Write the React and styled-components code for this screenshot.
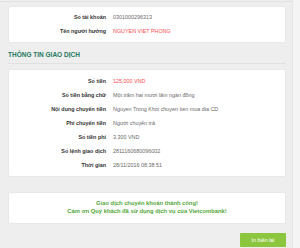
import React from "react";
import styled, { createGlobalStyle } from "styled-components";

const GlobalStyle = createGlobalStyle`
  html, body {
    margin: 0;
    padding: 0;
    background: #f4f4f4;
    font-family: "Liberation Sans", Arial, sans-serif;
  }
`;

const Page = styled.div`
  display: flex;
  width: 300px;
  height: 248px;
  overflow: hidden;
`;

const Main = styled.div`
  width: 293px;
  background: #eeeeee;
  padding: 0 6px 0 8px;
  box-sizing: border-box;
  border-right: 1px solid #e6e6e6;
`;

const PrevEdge = styled.div`
  height: 1px;
  border-bottom: 1px solid #e2e2e2;
  margin: 0 -6px 4px -8px;
`;

const Card = styled.div`
  background: #fff;
  border-radius: 2px;
  border: 1px solid #e8e8e8;
  box-sizing: border-box;
  padding: ${(p) => p.$pad || "4px 0"};
`;

const Row = styled.div`
  display: grid;
  grid-template-columns: 97px 1fr;
  column-gap: 7px;
  height: 14px;
  align-items: center;
  font-size: 5.4px;
  white-space: nowrap;
`;

const Label = styled.div`
  text-align: right;
  font-weight: bold;
  color: #333;
`;

const Value = styled.div`
  color: ${(p) => (p.$red ? "#ff4a4a" : "#6a6a6a")};
`;

const Title = styled.div`
  margin-top: 8px;
  padding-bottom: 4px;
  border-bottom: 1px solid #e0e0e0;
  margin-bottom: 5px;
  font-size: 6.5px;
  line-height: 8px;
  font-weight: bold;
  color: #237a5f;
`;

const Message = styled(Card)`
  margin-top: 15px;
  padding: 7px 0 8px;
  text-align: center;
  font-size: 5.8px;
  line-height: 7.6px;
  font-weight: bold;
  color: #52a83a;
`;

const Actions = styled.div`
  display: flex;
  justify-content: flex-end;
  margin-top: 9px;
`;

const Button = styled.button`
  width: 46px;
  height: 14px;
  border: none;
  border-radius: 1px;
  padding: 0;
  background: #8cc63f;
  color: #fff;
  font-family: "Liberation Sans", Arial, sans-serif;
  font-size: 5.4px;
  cursor: pointer;
`;

const account = [
  { label: "Số tài khoản", value: "0301000296313" },
  { label: "Tên người hưởng", value: "NGUYEN VIET PHONG", red: true },
];

const details = [
  { label: "Số tiền", value: "125,000 VND", red: true },
  { label: "Số tiền bằng chữ", value: "Một trăm hai mươi lăm ngàn đồng" },
  { label: "Nội dung chuyển tiền", value: "Nguyen Trong Khoi chuyen tien mua dia CD" },
  { label: "Phí chuyển tiền", value: "Người chuyển trả" },
  { label: "Số tiền phí", value: "3,300 VND" },
  { label: "Số lệnh giao dịch", value: "2811160680096002" },
  { label: "Thời gian", value: "28/11/2016 08:38:51" },
];

const Rows = ({ items }) =>
  items.map((it) => (
    <Row key={it.label}>
      <Label>{it.label}</Label>
      <Value $red={it.red}>{it.value}</Value>
    </Row>
  ));

export default function App() {
  return (
    <Page>
      <GlobalStyle />
      <Main>
        <PrevEdge />
        <Card $pad="3px 0 4px">
          <Rows items={account} />
        </Card>
        <Title>THÔNG TIN GIAO DỊCH</Title>
        <Card>
          <Rows items={details} />
        </Card>
        <Message>
          Giao dịch chuyển khoản thành công!
          <br />
          Cám ơn Quý khách đã sử dụng dịch vụ của Vietcombank!
        </Message>
        <Actions>
          <Button>In biên lai</Button>
        </Actions>
      </Main>
    </Page>
  );
}
